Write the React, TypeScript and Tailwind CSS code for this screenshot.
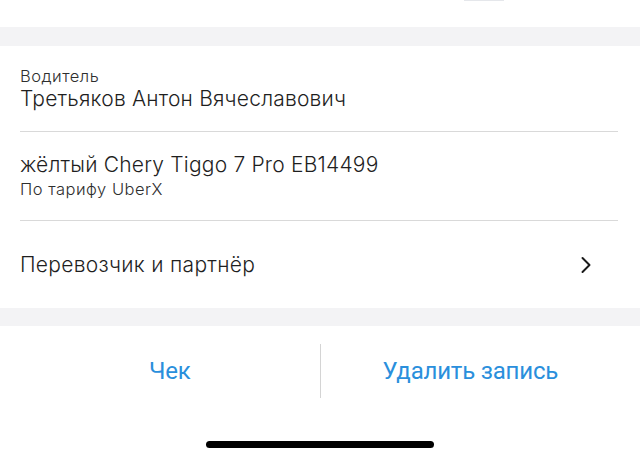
import React from "react";

function Chevron() {
  return (
    <svg width="12" height="18" viewBox="0 0 12 18" fill="none" className="text-[#1a1a1a]">
      <path d="M2.5 2 L9.5 9 L2.5 16" stroke="currentColor" strokeWidth="2" strokeLinecap="round" strokeLinejoin="round" />
    </svg>
  );
}

export default function App() {
  return (
    <div className="w-[640px] h-[464px] bg-white overflow-hidden text-[#1f1f1f]" style={{ fontFamily: "Inter, 'Noto Sans', sans-serif" }}>
      {/* previous block */}
      <div className="h-[27px] bg-white flex justify-end pr-[136px]">
        <div className="w-[40px] h-px bg-gray-200" />
      </div>
      <div className="h-[19px] bg-[#f3f3f5]" />

      {/* trip details */}
      <div className="pl-[20px] pr-[22px] font-[350]">
        <div className="pt-[20px] pb-[19px] border-b border-[#d9d9d9]">
          <p className="text-[16.5px] leading-[20px] tracking-[0.5px] text-[#2e2e2e]">Водитель</p>
          <p className="text-[21px] leading-[26px] tracking-[0.2px]">Третьяков Антон Вячеславович</p>
        </div>
        <div className="pt-[20px] pb-[20px] border-b border-[#d9d9d9]">
          <p className="text-[21px] leading-[26px] tracking-[0.2px]">жёлтый Chery Tiggo 7 Pro EB14499</p>
          <p className="text-[16.5px] leading-[22px] tracking-[0.5px] text-[#2e2e2e]">По тарифу UberX</p>
        </div>
        <div className="h-[87px] flex items-center justify-between pr-[26px]">
          <p className="text-[21px] leading-[26px] tracking-[0.3px]">Перевозчик и партнёр</p>
          <Chevron />
        </div>
      </div>

      <div className="h-[18px] bg-[#f3f3f5]" />

      {/* actions */}
      <div className="pt-[18px] flex h-[72px]" style={{ fontFamily: "Roboto, 'Noto Sans', sans-serif" }}>
        <button className="flex-1 pl-[20px] flex items-center justify-center text-[24px] tracking-[-0.2px] text-[#2a8fdc]">Чек</button>
        <div className="w-px bg-[#d4d4d4]" />
        <button className="flex-1 pr-[20px] flex items-center justify-center text-[24px] tracking-[-0.2px] text-[#2a8fdc]">Удалить запись</button>
      </div>

      <div className="flex justify-center pt-[43px]">
        <div className="w-[228px] h-[7px] rounded-full bg-black" />
      </div>
    </div>
  );
}
